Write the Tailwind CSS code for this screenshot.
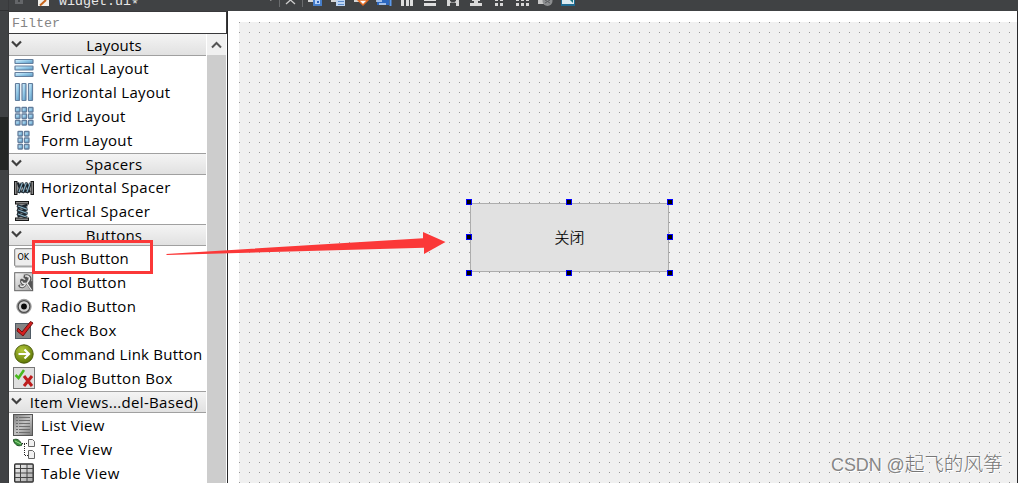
<!DOCTYPE html>
<html lang="en">
<head>
<meta charset="utf-8">
<title>Widget designer</title>
<script src="https://cdn.jsdelivr.net/npm/@tailwindcss/browser@4"></script>
</head>
<body class="w-[1018px] h-[483px] overflow-hidden relative bg-white text-black font-['Open_Sans','Noto_Sans',sans-serif]">
<svg class="absolute w-0 h-0" aria-hidden="true">
  <defs>
    <linearGradient id="blue" x1="0" y1="0" x2="1" y2="1"><stop offset="0" stop-color="#e2f6ff"/><stop offset=".5" stop-color="#93c9e8"/><stop offset="1" stop-color="#5592bd"/></linearGradient>
    <linearGradient id="metal" x1="0" y1="0" x2="1" y2="1"><stop offset="0" stop-color="#f4f4f4"/><stop offset="1" stop-color="#a5a5a5"/></linearGradient>
    <linearGradient id="list" x1="0" y1="0" x2="1" y2="1"><stop offset="0" stop-color="#7c7c7c"/><stop offset=".5" stop-color="#c4c4c4"/><stop offset="1" stop-color="#777"/></linearGradient>
    <radialGradient id="green" cx=".4" cy=".3" r=".7"><stop offset="0" stop-color="#b4c83c"/><stop offset="1" stop-color="#5f7806"/></radialGradient>
    <g id="spring">
      <path d="M4 5.500 7 15.500M8 5.500l3.500 10M12 5.500l3.500 10" stroke="#17212a" stroke-width="2.400" fill="none"/>
      <path d="M4.500 16 8 6M8.500 16l4-10M12.500 16l4-10" stroke="#222d36" stroke-width="3" fill="none"/>
      <path d="M5 15 8.300 6M9 15l3.300-9M13 15l3.300-9" stroke="#8ab5ca" stroke-width="1.100" fill="none"/>
      <rect x=".5" y="4.500" width="2.500" height="13" fill="#888" stroke="#191919"/>
      <rect x="17" y="4.500" width="2.500" height="13" fill="#888" stroke="#191919"/>
    </g>
    <path id="chev" d="M1 1.500 5.500 6 10 1.500" fill="none" stroke="#3f3f3f" stroke-width="2.200"/>
  </defs>
</svg>

<div class="flex flex-col w-full h-full">
  <header class="h-[11px] shrink-0 bg-[#404244] overflow-hidden flex">
    <svg class="w-[59px] h-[11px] shrink-0" viewBox="0 0 59 11">
      <path d="M8.500 0v11" stroke="#38393b"/>
      <path d="M0 10.500h9" stroke="#303133"/>
      <path d="M15 0h8v4h-8z" fill="#646669"/><path d="M18 0h2v2h-2z" fill="#404244"/>
      <path d="M38 0h11v6H38z" fill="#f3f1ec"/><path d="M40 5.500 46 0" stroke="#c7651c" stroke-width="2"/>
    </svg>
    <span class="w-[211px] -mt-[6px] h-[17px] leading-[16px] text-[13.330px] text-[#e8e8e8] font-['Liberation_Mono',monospace]">widget.ui<span class="relative top-[3px]">*</span></span>
    <svg class="w-[748px] h-[11px] shrink-0" viewBox="270 0 748 11">
      <path d="M270 0h1.500" stroke="#ccc"/>
      <path d="M279.500 0v7M302.500 0v7" stroke="#6a6c6e"/>
      <path d="m286 4 4.500-4L295 4" stroke="#ccc" stroke-width="1.300" fill="none"/>
      <path d="M308 0h5v2h-5zM331 0h6v2h-6zM354 0h5v2h-5z" fill="#d5d5d5"/>
      <path d="M313 0h9v6h-9z" fill="#477fcb"/><path d="M315 0h5v4h-5z" fill="#b9d4fa"/><path d="M317 1h2v2h-2z" fill="#2d62ba"/>
      <path d="M336 0h9v6h-9z" fill="#bed4f1"/><path d="M338 1.500h6M338 4.500h6" stroke="#5b8bcb"/>
      <path d="m358 0 5 5 5-5z" fill="#fff" stroke="#e36b24" stroke-width="1.500"/>
      <path d="M377 0h12v5h-12z" fill="#2d68bf"/><path d="M376 1h6M379 4h7" stroke="#c7dcf7" stroke-width="1.500"/><path d="M390.500 0v6" stroke="#5d9bed" stroke-width="2"/>
      <path d="M401 0h3v6h-3zM406 0h3v6h-3zM410 0h3v6h-3zM424 0h12v1h-12zM424 3h12v3h-12z" fill="#dedede"/>
      <path d="M447 0h3v6h-3zM456 0h3v6h-3zM450 1l3 2 3-2v2l-3-1-3 1z" fill="#d8d8d8"/>
      <path d="M470 3h12v3h-12zM472 0h8v1h-8zM474 1h4v3h-4z" fill="#d8d8d8"/>
      <path d="M495 0h3v1h-3zM500 0h3v1h-3zM495 3h3v3h-3zM500 3h3v3h-3zM516 0h3v1h-3zM521 0h3v1h-3zM526 0h3v1h-3zM516 3h3v3h-3zM521 3h3v3h-3zM526 3h3v3h-3z" fill="#d8d8d8"/>
      <path d="M538 0h8v4h-8z" fill="#c8c8c8"/><circle cx="547.500" cy="1" r="5" fill="#8b8d8f"/><path d="m545 0 5 3m-5 0 5-3" stroke="#5b5d5f"/>
      <path d="M561 0h14v6h-14z" fill="#1e6a91"/><path d="M562 0h12v4h-12z" fill="#dceaf0"/><path d="m570 0 3 3V0z" fill="#167482"/>
    </svg>
  </header>

  <div class="flex flex-1 min-h-0">
    <div class="w-[9px] shrink-0 flex flex-col bg-[#404244] border-r border-[#38393a]">
      <div class="h-[106px]"></div><div class="h-[53px] bg-[#242625]"></div>
    </div>

    <aside class="w-[219px] shrink-0 flex flex-col border-r border-[#29292b]">
      <div class="h-[23px] shrink-0 border-b border-t border-[#39393b] border-r pl-[3px] text-[13.330px] leading-[23px] text-[#858585] font-['Liberation_Mono',monospace]">Filter</div>
      <div class="flex flex-1 min-h-0">
        <div class="w-[197px] shrink-0 flex flex-col text-[15px] whitespace-nowrap tracking-[0.33px]">
          <div class="h-[22px] shrink-0 flex items-center border-b border-[#a0a0a0] bg-linear-to-b from-[#f4f4f4] to-[#e1e1e1]"><svg class="w-[12px] h-[8px] ml-[2px] -mt-[2px] shrink-0"><use href="#chev"/></svg><span class="grow text-center leading-[20px] -ml-px tracking-[0.15px]">Layouts</span></div>
          <div class="h-6 shrink-0 flex items-center pl-[5px] gap-[7px]"><svg class="size-5" viewBox="0 0 20 20"><g fill="url(#blue)" stroke="#637e9d" stroke-width="1.200"><rect x="1" y="1.500" width="18" height="4" rx=".5"/><rect x="1" y="8" width="18" height="4" rx=".5"/><rect x="1" y="14.500" width="18" height="4" rx=".5"/></g></svg><span>Vertical Layout</span></div>
          <div class="h-6 shrink-0 flex items-center pl-[5px] gap-[7px]"><svg class="size-5" viewBox="0 0 20 20"><g fill="url(#blue)" stroke="#637e9d" stroke-width="1.200"><rect x="1.500" y="1.500" width="4" height="17" rx=".5"/><rect x="8" y="1.500" width="4" height="17" rx=".5"/><rect x="14.500" y="1.500" width="4" height="17" rx=".5"/></g></svg><span>Horizontal Layout</span></div>
          <div class="h-6 shrink-0 flex items-center pl-[5px] gap-[7px]"><svg class="size-5" viewBox="0 0 20 20"><g fill="url(#blue)" stroke="#637e9d" stroke-width="1.300"><rect x="1.500" y="1.500" width="4.500" height="4.500" rx=".5"/><rect x="8" y="1.500" width="4.500" height="4.500" rx=".5"/><rect x="14.500" y="1.500" width="4.500" height="4.500" rx=".5"/><rect x="1.500" y="8" width="4.500" height="4.500" rx=".5"/><rect x="8" y="8" width="4.500" height="4.500" rx=".5"/><rect x="14.500" y="8" width="4.500" height="4.500" rx=".5"/><rect x="1.500" y="14.500" width="4.500" height="4.500" rx=".5"/><rect x="8" y="14.500" width="4.500" height="4.500" rx=".5"/><rect x="14.500" y="14.500" width="4.500" height="4.500" rx=".5"/></g></svg><span>Grid Layout</span></div>
          <div class="h-6 shrink-0 flex items-center pl-[5px] gap-[7px]"><svg class="size-5" viewBox="0 0 20 20"><g fill="url(#blue)" stroke="#637e9d" stroke-width="1.300"><rect x="4" y="1.500" width="4.500" height="4.500" rx=".5"/><rect x="10.500" y="1.500" width="4.500" height="4.500" rx=".5"/><rect x="4" y="8" width="4.500" height="4.500" rx=".5"/><rect x="10.500" y="8" width="4.500" height="4.500" rx=".5"/><rect x="4" y="14.500" width="4.500" height="4.500" rx=".5"/><rect x="10.500" y="14.500" width="4.500" height="4.500" rx=".5"/></g></svg><span>Form Layout</span></div>

          <div class="h-[22px] mt-px shrink-0 flex items-center border-y border-[#a0a0a0] bg-linear-to-b from-[#f4f4f4] to-[#e1e1e1]"><svg class="w-[12px] h-[8px] ml-[2px] -mt-[2px] shrink-0"><use href="#chev"/></svg><span class="grow text-center leading-[20px] -ml-px">Spacers</span></div>
          <div class="h-6 shrink-0 flex items-center pl-[5px] gap-[7px]"><svg class="size-5" viewBox="0 0 20 20"><use href="#spring"/></svg><span>Horizontal Spacer</span></div>
          <div class="h-6 shrink-0 flex items-center pl-[5px] gap-[7px] tracking-[0.4px]"><svg class="size-5" viewBox="0 0 20 20"><use href="#spring" transform="translate(19 0) rotate(90)"/></svg><span>Vertical Spacer</span></div>

          <div class="h-[22px] mt-px shrink-0 flex items-center border-y border-[#a0a0a0] bg-linear-to-b from-[#f4f4f4] to-[#e1e1e1]"><svg class="w-[12px] h-[8px] ml-[2px] -mt-[2px] shrink-0"><use href="#chev"/></svg><span class="grow text-center leading-[20px] -ml-px tracking-[0.2px]">Buttons</span></div>
          <div class="h-6 shrink-0 flex items-center pl-[5px] gap-[7px] tracking-[0.15px]"><svg class="size-5" viewBox="0 0 20 20"><rect x=".7" y=".7" width="18" height="17.500" rx="1" fill="#ededed" stroke="#777"/><path d="M1 19h18" stroke="#aaa"/><text x="3.500" y="12" font-family="DejaVu Sans" font-size="8" letter-spacing="0">OK</text></svg><span>Push Button</span></div>
          <div class="h-6 shrink-0 flex items-center pl-[5px] gap-[7px]"><svg class="size-5" viewBox="0 0 20 20"><rect x=".7" y=".7" width="18" height="18" fill="url(#metal)" stroke="#666"/><path d="m12 10 6.500 9V9z" fill="#555"/><path d="M10 4c4-1.500 7 1 6 4.500-.5 1.500-1.500 2.300-2.500 3L18 18M10 4l3 3-1.500 3L7.500 8C6.500 11 9 13 11.500 12M5 13c2 3 5 2.500 6.500-1" fill="none" stroke="#555" stroke-width="2.600" stroke-linejoin="round"/><path d="M11 4.200c4-1 5.500 2 4 4.300-.5 1-1.300 2-2.200 2.700L17.500 18M7.800 9c0 2.500 2 3 4 2M6 13.500c2 2 4.500 1 5.500-1.500" fill="none" stroke="#ececec" stroke-width="1.300"/></svg><span>Tool Button</span></div>
          <div class="h-6 shrink-0 flex items-center pl-[5px] gap-[7px]"><svg class="size-5" viewBox="0 0 20 20"><circle cx="10" cy="10.500" r="7.200" fill="#bbb" stroke="#999"/><circle cx="10" cy="10.500" r="5.900" fill="#d0d0d0" stroke="#4a4a4a" stroke-width="1.300"/><circle cx="10" cy="10.500" r="2.900" fill="#090909"/></svg><span>Radio Button</span></div>
          <div class="h-6 shrink-0 flex items-center pl-[5px] gap-[7px]"><svg class="size-5" viewBox="0 0 20 20"><rect x="1.500" y="3.500" width="15" height="15" fill="#858585" stroke="#505b65"/><path d="m4 8 4 4 8.500-10.500L19 3 9 16 3 11z" fill="#d62020" stroke="#71100f"/></svg><span>Check Box</span></div>
          <div class="h-6 shrink-0 flex items-center pl-[5px] gap-[7px] tracking-[0.22px]"><svg class="size-5 shrink-0" viewBox="0 0 20 20"><circle cx="10" cy="10" r="9.200" fill="url(#green)" stroke="#4d5d0d"/><path d="M4.500 10H15M10.500 5.500 15 10l-4.500 4.500" fill="none" stroke="#fff" stroke-width="2.200"/></svg><span>Command Link Button</span></div>
          <div class="h-6 shrink-0 flex items-center pl-[4px] gap-[6px]"><svg class="size-[22px]" viewBox="0 0 22 22"><rect x=".5" y=".5" width="21" height="21" fill="#dfdfdf" stroke="#777"/><path d="m2.500 8 3 3L11 3" fill="none" stroke="#49b91e" stroke-width="2.500"/><path d="m11 9 8 10M19 9l-8 10" stroke="#bd1c1c" stroke-width="3"/></svg><span>Dialog Button Box</span></div>

          <div class="h-[22px] mt-px shrink-0 flex items-center border-y border-[#a0a0a0] bg-linear-to-b from-[#f4f4f4] to-[#e1e1e1]"><svg class="w-[12px] h-[8px] ml-[2px] -mt-[2px] shrink-0"><use href="#chev"/></svg><span class="grow text-center leading-[20px] -ml-px">Item Views...del-Based)</span></div>
          <div class="h-6 shrink-0 flex items-center pl-[4px] gap-[8px]"><svg class="w-5 h-[22px]" viewBox="0 0 20 22"><rect x=".5" y=".5" width="19" height="21" fill="url(#list)" stroke="#555"/><path d="M3 3.500h2m1 0h11M3 6.500h2m1 0h11M3 9.500h2m1 0h11M3 12.500h2m1 0h11M3 15.500h2m1 0h11M3 18.500h2m1 0h11" stroke="#6e6e6e"/></svg><span>List View</span></div>
          <div class="h-6 shrink-0 flex items-center pl-[4px] gap-[6px] tracking-[0.4px]"><svg class="size-[22px]" viewBox="0 0 22 22"><path d="M0 2c4-2 7 0 9 5-4 2-7 0-9-5z" fill="#39903b" stroke="#1b4d20"/><path d="m2 3 6 3" stroke="#9ddd8d"/><path d="M9 5.500h5M11.500 6v11.500H15" fill="none" stroke="#222" stroke-dasharray="1 1"/><g fill="#f1f1f1" stroke="#666"><path d="M15.500 1.500h4l2 2v5h-6zM15.500 12.500h4l2 2v6h-6z"/></g></svg><span>Tree View</span></div>
          <div class="h-6 shrink-0 flex items-center pl-[5px] gap-[7px] tracking-[0.4px]"><svg class="size-5" viewBox="0 0 20 20"><rect x=".7" y="1" width="18.500" height="18" rx="1" fill="url(#metal)" stroke="#333" stroke-width="1.400"/><path d="M1 5.500h18M1 10h18M1 14.500h18M6.500 1v18M13 1v18" stroke="#444"/></svg><span>Table View</span></div>
        </div>
        <div class="w-px"></div>
        <div class="w-[19px] bg-[#cdcdcd] flex flex-col">
          <div class="h-[21px] bg-[#f0f0f0] flex items-center justify-center"><svg class="w-[11px] h-[8px]" viewBox="0 0 11 8"><path d="M1 6.500 5.500 2 10 6.500" fill="none" stroke="#555" stroke-width="2"/></svg></div>
        </div>
      </div>
    </aside>

    <main class="flex-1 pt-[11px] pl-[11px] bg-white border-r border-[#29292b]">
      <div class="relative w-full h-full bg-[#f0f0f0]">
        <svg class="block w-full h-full" shape-rendering="crispEdges"><defs><pattern id="dots" width="10" height="10" patternUnits="userSpaceOnUse"><rect width="1" height="1" fill="#999"/></pattern></defs><rect width="100%" height="100%" fill="url(#dots)"/></svg>
        <div class="absolute left-[231px] top-[181px] w-[199px] h-[69px] bg-[#e1e1e1] border border-[#adadad] flex items-center justify-center text-[15px] font-['Noto_Sans_CJK_SC',sans-serif] leading-[20px] pb-px font-light [-webkit-text-stroke:0.2px_#000]">关闭</div>
        <svg class="absolute left-[227px] top-[177px] w-[207px] h-[77px]" viewBox="0 0 207 77" shape-rendering="crispEdges"><path d="M.5.500h5v5h-5zM100.500.500h5v5h-5zM201.500.500h5v5h-5zM.5 35.500h5v5h-5zM201.500 35.500h5v5h-5zM.5 71.500h5v5h-5zM100.500 71.500h5v5h-5zM201.500 71.500h5v5h-5z" fill="#000" stroke="#00f"/></svg>
        <div class="absolute left-[592px] top-[427px] whitespace-nowrap text-[18px] leading-[28px] text-[#868686] [text-shadow:1px_1px_0_#fff] font-['Liberation_Sans','Noto_Sans_CJK_SC',sans-serif] tracking-[-0.1px]"><span>CSDN @</span><span class="font-['Noto_Sans_CJK_SC',sans-serif] font-light text-[#777] text-[19.700px]">起飞的风筝</span></div>
      </div>
    </main>
  </div>
</div>

<div class="absolute left-[32px] top-[240px] w-[121px] h-[34px] border-[3px] border-[#fb3838]"></div>
<svg class="absolute left-[166px] top-[231px] w-[281px] h-[24px]" viewBox="166 231 281 24"><path d="M166 254 423 238.300V232l22.500 10L424 254v-6.200L167 255z" fill="#fb3838"/></svg>
</body>
</html>
